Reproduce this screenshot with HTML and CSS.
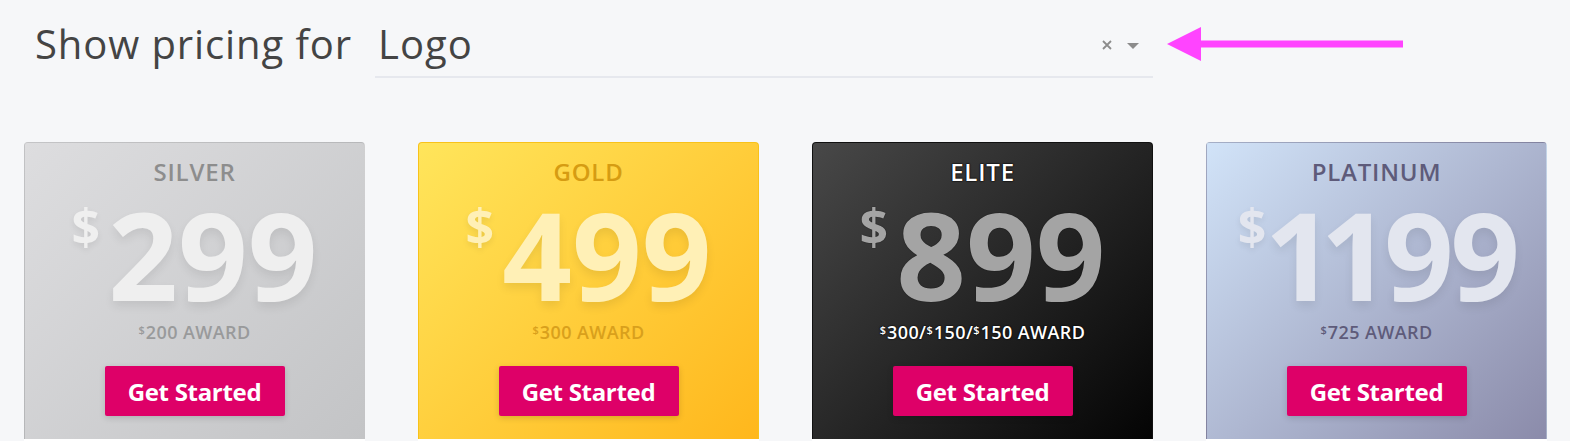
FILE: index.html
```html
<!DOCTYPE html>
<html lang="en">
<head>
<meta charset="utf-8">
<title>Pricing</title>
<link rel="stylesheet" href="styles.css">
</head>
<body>
<header class="filter">
  <span class="filter-label">Show pricing for</span>
  <div class="select">
    <span class="select-value">Logo</span>
    <span class="select-icons">
      <svg class="icon-clear" width="12" height="12" viewBox="0 0 12 12"><path d="M2 2 L10 10 M10 2 L2 10" stroke="#8c8c8c" stroke-width="1.8" fill="none"/></svg>
      <svg class="icon-caret" width="14" height="8" viewBox="0 0 14 8"><path d="M1 1 L13 1 L7 7 Z" fill="#8c8c8c"/></svg>
    </span>
  </div>
  <svg class="pointer" width="240" height="36" viewBox="0 0 240 36"><path d="M2 18 L36 1 L36 35 Z" fill="#ff44ff"/><rect x="35" y="14.5" width="203" height="7" fill="#ff44ff"/></svg>
</header>
<main class="plans">
  <section class="plan plan-silver">
    <div class="plan-card">
      <h2 class="plan-name">SILVER</h2>
      <div class="plan-price"><span class="cur">$</span><span class="amt">299</span></div>
      <p class="plan-award"><span class="cur-sm">$</span>200 AWARD</p>
      <a class="btn" href="#">Get Started</a>
    </div>
    <div class="plan-foot"></div>
  </section>
  <section class="plan plan-gold">
    <div class="plan-card">
      <h2 class="plan-name">GOLD</h2>
      <div class="plan-price"><span class="cur">$</span><span class="amt">499</span></div>
      <p class="plan-award"><span class="cur-sm">$</span>300 AWARD</p>
      <a class="btn" href="#">Get Started</a>
    </div>
    <div class="plan-foot"></div>
  </section>
  <section class="plan plan-elite">
    <div class="plan-card">
      <h2 class="plan-name">ELITE</h2>
      <div class="plan-price"><span class="cur">$</span><span class="amt">899</span></div>
      <p class="plan-award"><span class="cur-sm">$</span>300/<span class="cur-sm">$</span>150/<span class="cur-sm">$</span>150 AWARD</p>
      <a class="btn" href="#">Get Started</a>
    </div>
    <div class="plan-foot"></div>
  </section>
  <section class="plan plan-platinum">
    <div class="plan-card">
      <h2 class="plan-name">PLATINUM</h2>
      <div class="plan-price"><span class="cur cur-tight">$</span><span class="amt amt-narrow">1199</span></div>
      <p class="plan-award"><span class="cur-sm">$</span>725 AWARD</p>
      <a class="btn" href="#">Get Started</a>
    </div>
    <div class="plan-foot"></div>
  </section>
</main>
</body>
</html>
```
FILE: styles.css
```css
* { box-sizing: border-box; }
html, body { margin: 0; padding: 0; }
body {
  background: #f6f7f9;
  font-family: "Open Sans", "Liberation Sans", sans-serif;
  color: #444;
  overflow: hidden;
}

.filter {
  display: flex;
  align-items: flex-start;
  padding: 24px 0 0 35px;
  height: 142px;
}
.filter-label {
  font-size: 40px;
  line-height: 40px;
  font-weight: 500;
  letter-spacing: 0.9px;
  color: #444;
  margin-right: 23px;
}
.select {
  width: 778px;
  display: flex;
  align-items: flex-start;
  justify-content: space-between;
  padding: 0 0 12px 3px;
  border-bottom: 2px solid #e6e8ee;
}
.select-value {
  font-size: 40px;
  line-height: 40px;
  font-weight: 500;
  letter-spacing: 1px;
  color: #444;
}
.select-icons {
  display: flex;
  align-items: center;
  gap: 13px;
  padding: 15px 13px 0 0;
}
.icon-caret { margin-top: 2px; }
.pointer { margin: 2px 0 0 12px; }

.plans {
  display: flex;
  gap: 53px;
  padding-left: 24px;
}
.plan {
  width: 341px;
  flex: none;
}
.plan-card {
  height: 297px;
  border-radius: 4px 4px 0 0;
  display: flex;
  flex-direction: column;
  align-items: center;
  padding-top: 17px;
  border: 1px solid rgba(0,0,0,0.06);
  border-bottom: none;
}
.plan-foot {
  height: 20px;
  background: #fff;
}
.plan-name {
  margin: 0;
  font-size: 24px;
  line-height: 24px;
  font-weight: 600;
  letter-spacing: 0.8px;
}
.plan-price {
  display: flex;
  align-items: flex-start;
  margin-top: 9px;
  height: 122px;
}
.cur {
  font-size: 50px;
  line-height: 50px;
  font-weight: 700;
  margin-top: 8px;
  margin-right: 8px;
  text-shadow: 0 3px 6px rgba(0,0,0,0.08);
}
.cur-tight { margin-right: 4px; }
.amt {
  font-size: 122px;
  line-height: 122px;
  font-weight: 700;
  letter-spacing: 0;
  text-shadow: 0 5px 10px rgba(0,0,0,0.08);
}
.amt-narrow {
  font-variant-numeric: proportional-nums;
  letter-spacing: -7px;
}
.plan-award {
  margin: 8px 0 0;
  font-size: 18px;
  line-height: 18px;
  font-weight: 600;
  letter-spacing: 0.4px;
}
.cur-sm {
  display: inline-block;
  font-size: 11px;
  line-height: 11px;
  vertical-align: top;
  margin: 1px 1px 0 0;
  letter-spacing: 0;
}
.btn {
  margin-top: 25px;
  width: 180px;
  height: 50px;
  display: flex;
  align-items: center;
  justify-content: center;
  background: #de0068;
  color: #fff;
  text-decoration: none;
  font-size: 24px;
  font-weight: 700;
  letter-spacing: -0.3px;
  border-radius: 2px;
  box-shadow: 0 2px 6px rgba(0,0,0,0.15);
  padding-top: 1px;
}

.plan-silver .plan-card { background: linear-gradient(135deg, #dddddf 0%, #c3c4c6 100%); }
.plan-silver .plan-name { color: #8d8d8d; }
.plan-silver .plan-price { color: #efefef; }
.plan-silver .plan-award { color: #999a9b; }

.plan-gold .plan-card { background: linear-gradient(135deg, #ffe55b 0%, #ffb71c 100%); border-color: #f8c21a; }
.plan-gold .plan-name { color: #d69c12; }
.plan-gold .plan-price { color: #fff0b6; }
.plan-gold .plan-award { color: #d9a01c; }

.plan-elite .plan-card { background: linear-gradient(135deg, #484848 0%, #040404 100%); border-color: #111; }
.plan-elite .plan-name { color: #fff; text-shadow: 0 0 1px #000, 0 0 1px #000, 0 0 2px #000; }
.plan-elite .plan-price { color: #a4a4a4; }
.plan-elite .cur, .plan-elite .amt { text-shadow: 0 0 1px #000; }
.plan-elite .plan-award { color: #fff; text-shadow: 0 0 1px #000, 0 0 2px #000; }

.plan-platinum .plan-card { background: linear-gradient(135deg, #d1e3f8 0%, #8b8baa 100%); }
.plan-platinum .plan-name { color: #5e5b7a; }
.plan-platinum .plan-price { color: #e3e6ef; }
.plan-platinum .plan-award { color: #5e5b7a; }
```
